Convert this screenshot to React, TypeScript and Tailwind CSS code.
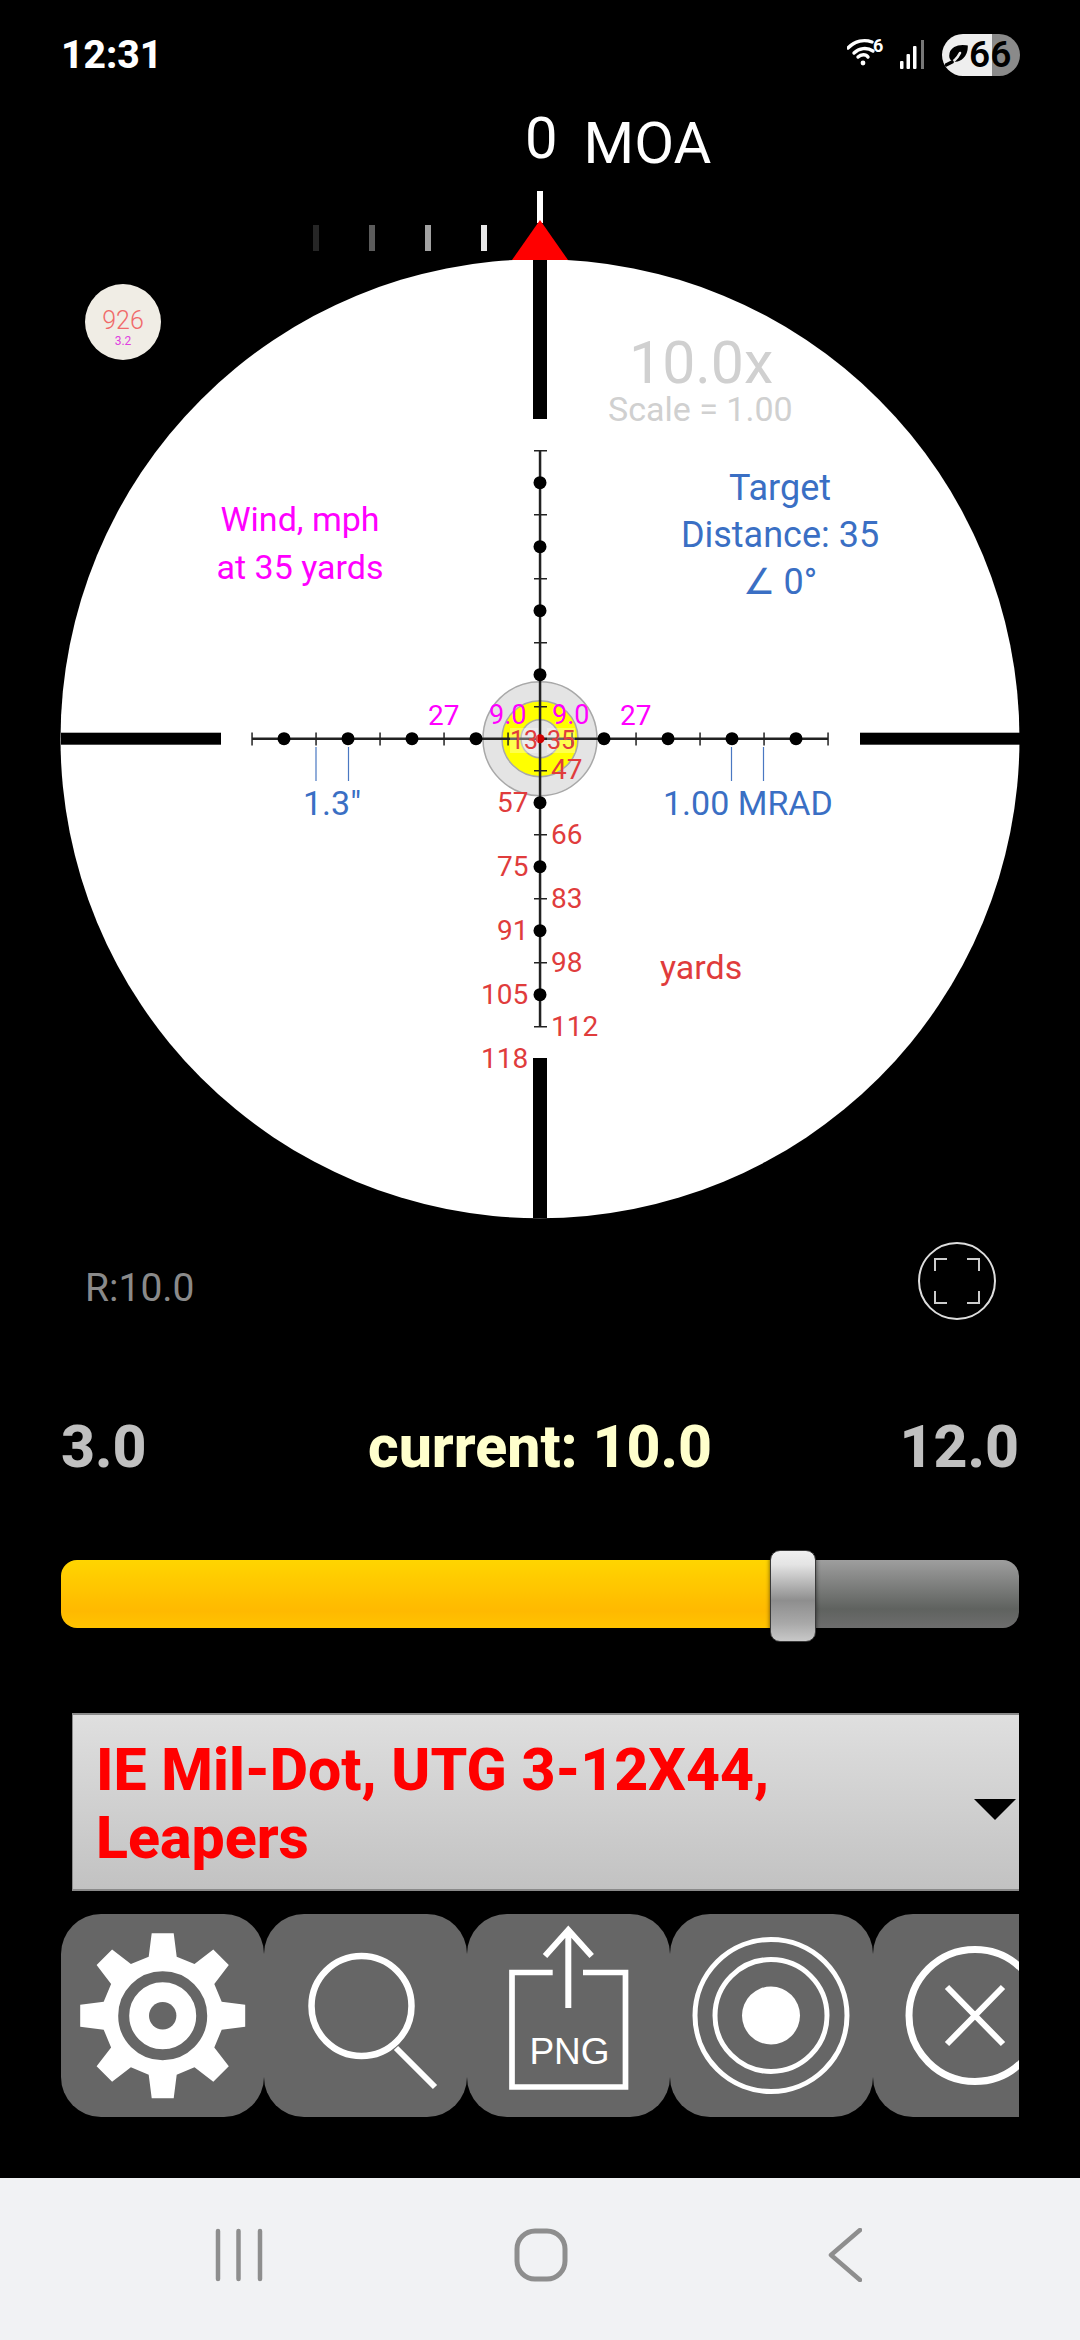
const dots = [-256, -192, -128, -64, 64, 128, 192, 256];
const ticks = [-288, -224, -160, -96, -32, 32, 96, 160, 224, 288];

function gearPoints() {
  const cx = 162.7;
  const cy = 2015.7;
  const shape = [[-14, 59], [-11, 82.5], [11, 82.5], [14, 59]];
  const pts: string[] = [];
  for (let i = 0; i < 8; i++) {
    const a = (i * Math.PI) / 4;
    for (const [x, y] of shape) {
      const px = cx + x * Math.cos(a) + y * Math.sin(a);
      const py = cy + x * Math.sin(a) - y * Math.cos(a);
      pts.push(`${px.toFixed(1)},${py.toFixed(1)}`);
    }
  }
  return pts.join(" ");
}

function StatusBar() {
  return (
    <div className="flex h-[104px] shrink-0 items-start justify-between pl-[61px] pr-[60px] pt-[34px] text-white">
      <span className="text-[39px] font-extrabold leading-[42px]">12:31</span>
      <div className="flex items-center">
        <div className="relative h-[42px] w-[38px]">
          <svg width="38" height="42" viewBox="0 0 38 42" fill="none" stroke="white" strokeWidth="3.4" strokeLinecap="round">
            <path d="M1 14 C8 7 17 5 25 8" />
            <path d="M7 19 C12 14 20 13 26 17" />
            <path d="M11 23 C14 20 19 20 21 23" />
            <circle cx="16" cy="29" r="2.4" fill="white" stroke="none" />
          </svg>
          <span className="absolute left-[26px] top-[3px] text-[18px] font-bold leading-[18px]">6</span>
        </div>
        <svg className="ml-[14px]" width="28" height="42" viewBox="0 0 28 42">
          <rect x="1" y="27" width="3.5" height="8" rx="1" fill="white" />
          <rect x="7.5" y="20" width="3.5" height="15" rx="1" fill="white" />
          <rect x="14" y="12" width="3.5" height="23" rx="1" fill="white" />
          <rect x="22" y="6" width="3" height="29" fill="#777" />
        </svg>
        <div className="relative ml-[15px] flex h-[42px] w-[78px] items-center overflow-hidden rounded-[21px] bg-[linear-gradient(90deg,#eeeeee_64%,#8a8a8a_64%)] pl-[3px]">
          <svg width="23" height="23" viewBox="0 0 23 23" fill="none" stroke="black" strokeWidth="3.6" strokeLinecap="round">
            <path d="M21 3 C12 2 6 5 6 12 C6 17 13 17 17 13 C20 10 21 6 21 3 Z" fill="black" />
            <path d="M2 21 C7 19 12 15 15 9" stroke="#eeeeee" strokeWidth="2.6" />
            <path d="M1 21 L7 18" />
          </svg>
          <span className="ml-[1px] text-[37px] font-semibold leading-[42px] text-black">66</span>
        </div>
      </div>
    </div>
  );
}

function Reticle() {
  return (
    <svg className="absolute inset-0" width="1080" height="1052" viewBox="0 188 1080 1052">
      <rect x="537" y="191" width="6" height="32" fill="white" />
      <rect x="313" y="225" width="6" height="26" fill="#262626" />
      <rect x="369" y="225" width="6" height="26" fill="#5c5c5c" />
      <rect x="425" y="225" width="6" height="26" fill="#a2a2a2" />
      <rect x="481" y="225" width="6" height="26" fill="#e8e8e8" />
      <circle cx="540" cy="738.7" r="479.5" fill="white" />
      <polygon points="540,220 568,260 512,260" fill="#ff0000" />

      <rect x="61" y="732.7" width="160" height="12" fill="black" />
      <rect x="860" y="732.7" width="160" height="12" fill="black" />
      <rect x="533" y="260" width="14" height="159" fill="black" />
      <rect x="533" y="1058" width="14" height="160" fill="black" />

      <circle cx="540" cy="738.7" r="57" fill="#e4e4e4" stroke="#a8a8a8" strokeWidth="1.5" />
      <circle cx="540" cy="738.7" r="38" fill="#ffff00" stroke="#a8a8a8" strokeWidth="1.5" />
      <circle cx="540" cy="738.7" r="19" fill="#e4e4e4" stroke="#a8a8a8" strokeWidth="1.5" />

      <rect x="252" y="737.5" width="576" height="2.5" fill="#222" />
      <rect x="538.8" y="451" width="2.5" height="576" fill="#222" />
      {ticks.map((t) => (
        <g key={t}>
          <rect x={539.3 + t} y="732.5" width="1.5" height="13" fill="#222" />
          <rect x="534" y={738 + t} width="13" height="1.5" fill="#222" />
        </g>
      ))}
      {dots.map((d) => (
        <g key={d}>
          <circle cx={540 + d} cy="738.7" r="6.5" fill="black" />
          <circle cx="540" cy={738.7 + d} r="6.5" fill="black" />
        </g>
      ))}
      <circle cx="540" cy="738.7" r="4.5" fill="#d00000" />

      <path d="M316 747V781M348.5 747V781M731.5 747V781M763.5 747V781" stroke="#4a78c2" strokeWidth="1.2" />
    </svg>
  );
}

function ScopeLabels() {
  return (
    <>
      <div className="absolute left-[85px] top-[96px] flex h-[76px] w-[76px] flex-col items-center rounded-full bg-[#f0ede5] pt-[24px]">
        <span className="text-[25px] font-light leading-[26px] text-[#f06a6a]">926</span>
        <span className="text-[12px] leading-[15px] text-[#e040e0]">3.2</span>
      </div>

      <span className="absolute left-[629px] top-[146px] text-[59px] leading-[57px] text-[#d0d0d0]">10.0x</span>
      <span className="absolute left-[608px] top-[204px] text-[34px] leading-[34px] text-[#d0d0d0]">Scale = 1.00</span>

      <div className="absolute left-[200px] top-[307px] w-[200px] text-center text-[34px] leading-[48px] text-[#ff00ff]">
        <div>Wind, mph</div>
        <div>at 35 yards</div>
      </div>
      <div className="absolute left-[630px] top-[277px] w-[300px] text-center text-[36px] leading-[47px] text-[#3a6fc4]">
        <div>Target</div>
        <div>Distance: 35</div>
        <div>∠ 0°</div>
      </div>

      <span className="absolute left-[428px] top-[515px] text-[28px] leading-[25px] text-[#ff00ff]">27</span>
      <span className="absolute left-[489px] top-[515px] text-[27px] leading-[25px] text-[#ff00ff]">9.0</span>
      <span className="absolute left-[552px] top-[515px] text-[27px] leading-[25px] text-[#ff00ff]">9.0</span>
      <span className="absolute left-[620px] top-[515px] text-[28px] leading-[25px] text-[#ff00ff]">27</span>

      <span className="absolute left-[510px] top-[540px] bg-white/30 text-[25px] leading-[25px] text-[#e03c3c]">13</span>
      <span className="absolute left-[547px] top-[540px] bg-white/30 text-[25px] leading-[25px] text-[#e03c3c]">35</span>

      <span className="absolute left-[551px] top-[568px] text-[28px] leading-[28px] text-[#e03c3c]">47</span>
      <span className="absolute left-[497px] top-[601px] text-[28px] leading-[28px] text-[#e03c3c]">57</span>
      <span className="absolute left-[551px] top-[633px] text-[28px] leading-[28px] text-[#e03c3c]">66</span>
      <span className="absolute left-[497px] top-[665px] text-[28px] leading-[28px] text-[#e03c3c]">75</span>
      <span className="absolute left-[551px] top-[697px] text-[28px] leading-[28px] text-[#e03c3c]">83</span>
      <span className="absolute left-[497px] top-[729px] text-[28px] leading-[28px] text-[#e03c3c]">91</span>
      <span className="absolute left-[551px] top-[761px] text-[28px] leading-[28px] text-[#e03c3c]">98</span>
      <span className="absolute left-[481px] top-[793px] text-[28px] leading-[28px] text-[#e03c3c]">105</span>
      <span className="absolute left-[551px] top-[825px] text-[28px] leading-[28px] text-[#e03c3c]">112</span>
      <span className="absolute left-[481px] top-[857px] text-[28px] leading-[28px] text-[#e03c3c]">118</span>
      <span className="absolute left-[660px] top-[762px] text-[34px] leading-[34px] text-[#e03c3c]">yards</span>

      <span className="absolute left-[303px] top-[598px] text-[34px] leading-[34px] text-[#3a6fc4]">1.3"</span>
      <span className="absolute left-[663px] top-[598px] text-[34px] leading-[34px] text-[#3a6fc4]">1.00 MRAD</span>
    </>
  );
}

function IconButton({ children }: { children: React.ReactNode }) {
  return <div className="h-[203px] w-[203px] shrink-0 rounded-[40px] bg-[#666666]">{children}</div>;
}

function ButtonRow() {
  return (
    <div className="relative mt-[23px] flex h-[203px] w-[958px] overflow-hidden">
      <IconButton>
        <svg width="203" height="203" viewBox="61 1914 203 203">
          <polygon points={gearPoints()} fill="white" />
          <circle cx="162.7" cy="2015.7" r="39" fill="none" stroke="#666666" strokeWidth="11" />
          <circle cx="162.7" cy="2015.7" r="13.7" fill="#666666" />
        </svg>
      </IconButton>
      <IconButton>
        <svg width="203" height="203" viewBox="264 1914 203 203" fill="none" stroke="white">
          <circle cx="361.5" cy="2006" r="50" strokeWidth="6.5" />
          <path d="M396 2048 L435 2087" strokeWidth="6" />
        </svg>
      </IconButton>
      <IconButton>
        <div className="relative h-[203px] w-[203px]">
          <svg width="203" height="203" viewBox="467 1914 203 203" fill="none" stroke="white">
            <path d="M552.7 1972.5 H512 V2087 H625.5 V1972.5 H583" strokeWidth="5.7" />
            <path d="M568.3 2008 V1930 M545 1956 L568.3 1930 L591.7 1956" strokeWidth="6" />
          </svg>
          <span className="absolute left-[1px] top-[119px] w-[203px] text-center font-['Liberation_Sans',sans-serif] text-[37px] leading-[37px] text-white">PNG</span>
        </div>
      </IconButton>
      <IconButton>
        <svg width="203" height="203" viewBox="670 1914 203 203" fill="none" stroke="white">
          <circle cx="771" cy="2015.5" r="76" strokeWidth="5" />
          <circle cx="771" cy="2015.5" r="56" strokeWidth="5" />
          <circle cx="771" cy="2015.5" r="29" fill="white" stroke="none" />
        </svg>
      </IconButton>
      <IconButton>
        <svg width="203" height="203" viewBox="873 1914 203 203" fill="none" stroke="white">
          <circle cx="975" cy="2015.5" r="66" strokeWidth="7" />
          <path d="M947 1987 L1003 2044 M1003 1987 L947 2044" strokeWidth="6" />
        </svg>
      </IconButton>
    </div>
  );
}

function NavBar() {
  return (
    <div className="mt-auto flex h-[162px] shrink-0 items-start bg-[#f1f2f4] pl-[214px] pt-[50px]">
      <svg width="50" height="54" viewBox="0 0 50 54" fill="none" stroke="#8e8e8e" strokeWidth="4.5" strokeLinecap="round">
        <path d="M4 3V51M24.5 3V51M46 3V51" />
      </svg>
      <svg className="ml-[250px]" width="54" height="54" viewBox="0 0 54 54" fill="none" stroke="#8e8e8e" strokeWidth="5">
        <rect x="3" y="3" width="48" height="48" rx="18" />
      </svg>
      <svg className="ml-[260px]" width="34" height="54" viewBox="0 0 34 54" fill="none" stroke="#8e8e8e" strokeWidth="4.5" strokeLinecap="round" strokeLinejoin="round">
        <path d="M32 2 L3 27 L32 52" />
      </svg>
    </div>
  );
}

export default function App() {
  return (
    <div className="flex h-[2340px] w-[1080px] flex-col overflow-hidden bg-black font-[Roboto,sans-serif]">
      <StatusBar />

      <div className="flex h-[84px] shrink-0 items-start text-[58px] leading-[58px] text-white">
        <span className="ml-[525px] mt-[5px]">0</span>
        <span className="ml-[26px] mt-[10px]">MOA</span>
      </div>

      <div className="relative h-[1052px] shrink-0">
        <Reticle />
        <ScopeLabels />
      </div>

      <div className="flex h-[84px] shrink-0 items-center justify-between pl-[85px] pr-[84px]">
        <span className="mt-[13px] text-[39px] leading-[39px] text-[#8a8a8a]">R:10.0</span>
        <div className="mt-[-2px] flex h-[78px] w-[78px] items-center justify-center rounded-full border-2 border-[#dddddd]">
          <svg width="46" height="46" viewBox="0 0 46 46" fill="none" stroke="#cccccc" strokeWidth="2">
            <path d="M1 13V1H13M33 1H45V13M45 33V45H33M13 45H1V33" />
          </svg>
        </div>
      </div>

      <div className="mt-[95px] grid h-[56px] shrink-0 grid-cols-[1fr_auto_1fr] items-center px-[61px] text-[59px] font-extrabold leading-[56px]">
        <span className="text-[#c0c0c0]">3.0</span>
        <span className="text-[#ffffcc]">current: 10.0</span>
        <span className="text-right text-[#c0c0c0]">12.0</span>
      </div>

      <div className="relative mx-[61px] mt-[85px] flex h-[68px] shrink-0">
        <div className="w-[710px] rounded-l-[16px] bg-[linear-gradient(180deg,#ffd500_0%,#ffb900_75%,#ffc400_100%)]" />
        <div className="flex-1 rounded-r-[16px] bg-[linear-gradient(180deg,#9e9e9e_0%,#5f625f_72%,#6e6e6e_100%)]" />
        <div className="absolute left-[709px] top-[-10px] h-[92px] w-[46px] rounded-[10px] border border-[#3a3a3a] bg-[linear-gradient(180deg,#f0f0f0_0%,#e4e4e4_15%,#8e8e8e_55%,#a8a8a8_80%,#c8c8c8_100%)] shadow-[0_0_4px_rgba(0,0,0,0.6)]" />
      </div>

      <div className="relative ml-[72px] mr-[61px] mt-[85px] flex h-[178px] shrink-0 items-center border-y-2 border-l border-[#8a8a8a] bg-[linear-gradient(180deg,#dfdfdf_0%,#c2c2c2_100%)] pl-[23px] pt-[3px]">
        <span className="w-[760px] text-[59px] font-extrabold leading-[68px] text-[#ff0000]">IE Mil-Dot, UTG 3-12X44, Leapers</span>
        <div className="absolute right-[3px] top-[84px] h-0 w-0 border-x-[21px] border-t-[21px] border-x-transparent border-t-black" />
      </div>

      <div className="px-[61px]">
        <ButtonRow />
      </div>

      <NavBar />
    </div>
  );
}
